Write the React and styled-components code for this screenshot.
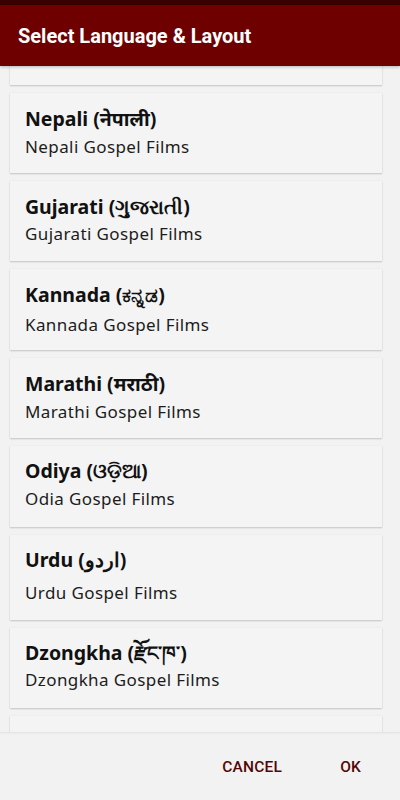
import React from "react";
import styled, { createGlobalStyle } from "styled-components";

const GlobalStyle = createGlobalStyle`
  html, body {
    margin: 0;
    padding: 0;
    background: #f2f2f2;
  }
  * {
    box-sizing: border-box;
  }
`;

const Screen = styled.div`
  width: 400px;
  height: 800px;
  display: flex;
  flex-direction: column;
  background: #f2f2f2;
  overflow: hidden;
`;

const StatusStrip = styled.div`
  height: 5px;
  background: #3a0000;
`;

const Header = styled.header`
  height: 61px;
  background: #6f0000;
  display: flex;
  align-items: center;
  padding-left: 18px;
  box-shadow: 0 1px 3px rgba(0, 0, 0, 0.25);
  position: relative;
  z-index: 1;
`;

const Title = styled.h1`
  margin: 0;
  color: #ffffff;
  font-family: Roboto, "Liberation Sans", sans-serif;
  font-weight: 700;
  font-size: 20px;
`;

const List = styled.div`
  flex: 1;
  overflow: hidden;
  padding: 0 18px 0 10px;
  display: flex;
  flex-direction: column;
  gap: 8px;
  box-shadow: 0 1px 2px rgba(0, 0, 0, 0.08);
`;

// $cut: the card scrolled mostly out of view at the top of the list
const Card = styled.div`
  flex-shrink: 0;
  background: #f4f4f4;
  height: ${(p) => p.$h || 80}px;
  margin-top: ${(p) => (p.$cut ? `${19 - (p.$h || 80)}px` : "0")};
  padding: ${(p) => p.$pad ?? 14}px 15px 0 15px;
  box-shadow: 0 1px 1.5px rgba(0, 0, 0, 0.18), 0 0 1px rgba(0, 0, 0, 0.08);
`;

const LangName = styled.div`
  font-family: "Noto Sans", "Noto Sans CJK SC", sans-serif;
  font-weight: 700;
  font-size: 19.5px;
  line-height: 25px;
  color: #111111;
  white-space: nowrap;
`;

const Subtitle = styled.div`
  font-family: "Noto Sans", sans-serif;
  font-size: 17px;
  letter-spacing: 0.4px;
  line-height: 22px;
  color: #1c1c1c;
  margin-top: ${(p) => p.$gap ?? 5}px;
`;

const Footer = styled.div`
  height: 68px;
  display: flex;
  justify-content: flex-end;
  align-items: center;
  padding-right: 10px;
  padding-top: 2px;
`;

const TextButton = styled.button`
  border: none;
  background: none;
  font-family: Roboto, "Liberation Sans", sans-serif;
  font-weight: 500;
  font-size: 15.5px;
  letter-spacing: 0.2px;
  color: #520606;
  padding: 8px 29px;
  cursor: pointer;
`;

const languages = [
  { name: "Hindi (हिन्दी)", sub: "Hindi Gospel Films", cut: true, h: 110 },
  { name: "Nepali (नेपाली)", sub: "Nepali Gospel Films", pad: 13 },
  { name: "Gujarati (ગુજરાતી)", sub: "Gujarati Gospel Films", pad: 13, gap: 4 },
  { name: "Kannada (ಕನ್ನಡ)", sub: "Kannada Gospel Films", h: 81, pad: 13, gap: 7 },
  { name: "Marathi (मराठी)", sub: "Marathi Gospel Films", pad: 13, gap: 5 },
  { name: "Odiya (ଓଡ଼ିଆ)", sub: "Odia Gospel Films", h: 81, pad: 12, gap: 5 },
  { name: "Urdu (اردو)", sub: "Urdu Gospel Films", h: 85, pad: 12, gap: 10 },
  { name: "Dzongkha (རྫོང་ཁ་)", sub: "Dzongkha Gospel Films", pad: 12, gap: 4 },
  { name: "English", sub: "English Gospel Films" },
];

export default function App() {
  return (
    <>
      <GlobalStyle />
      <Screen>
        <StatusStrip />
        <Header>
          <Title>Select Language &amp; Layout</Title>
        </Header>
        <List>
          {languages.map((l) => (
            <Card key={l.name} $cut={l.cut} $h={l.h} $pad={l.pad}>
              <LangName>{l.name}</LangName>
              <Subtitle $gap={l.gap}>{l.sub}</Subtitle>
            </Card>
          ))}
        </List>
        <Footer>
          <TextButton>CANCEL</TextButton>
          <TextButton>OK</TextButton>
        </Footer>
      </Screen>
    </>
  );
}
